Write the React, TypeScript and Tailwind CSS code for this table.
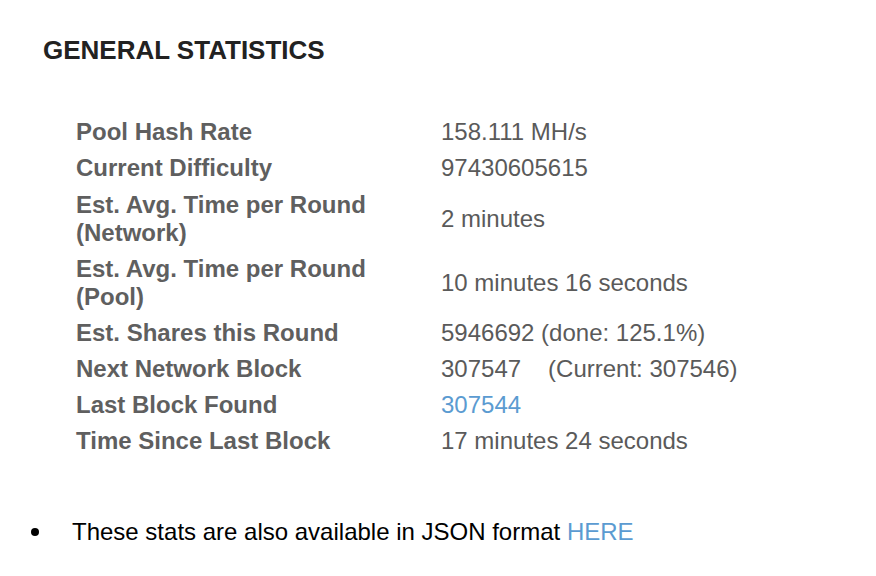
import React from "react";

const rows: { label: string; value: React.ReactNode; multi?: boolean }[] = [
  { label: "Pool Hash Rate", value: "158.111 MH/s" },
  { label: "Current Difficulty", value: "97430605615" },
  { label: "Est. Avg. Time per Round (Network)", value: "2 minutes", multi: true },
  { label: "Est. Avg. Time per Round (Pool)", value: "10 minutes 16 seconds" },
  { label: "Est. Shares this Round", value: "5946692 (done: 125.1%)" },
  {
    label: "Next Network Block",
    value: (
      <>
        <span>307547</span>
        <span className="ml-[27px]">(Current: 307546)</span>
      </>
    ),
  },
  { label: "Last Block Found", value: <a className="text-[#5b9bd1]" href="#">307544</a> },
  { label: "Time Since Last Block", value: "17 minutes 24 seconds" },
];

export default function App() {
  return (
    <div
      className="w-[876px] h-[576px] bg-white overflow-hidden"
      style={{ fontFamily: '"Liberation Sans", Arial, Helvetica, sans-serif' }}
    >
      <h1 className="pl-[43px] pt-[35px] text-[26px] leading-[30px] font-bold text-[#222222]">
        GENERAL STATISTICS
      </h1>
      <div className="mt-[49px] pl-[76px] flex flex-col">
        {rows.map((r, i) => (
          <div key={i} className={r.multi ? "flex items-center pt-[5px] pb-[4px]" : "flex items-center py-[4px]"}>
            <div className="w-[365px] pr-[20px] text-[24px] leading-[28px] font-bold text-[#5f5f5f]">
              {r.label}
            </div>
            <div className="text-[24px] leading-[28px] text-[#5a5a5a]">{r.value}</div>
          </div>
        ))}
      </div>
      <div className="mt-[59px] flex items-center">
        <span className="ml-[31px] w-[8px] h-[8px] rounded-full bg-black" />
        <span className="ml-[33px] text-[24px] leading-[28px] text-black">
          These stats are also available in JSON format{" "}
          <a href="#" className="text-[#5b9bd1]">HERE</a>
        </span>
      </div>
    </div>
  );
}
